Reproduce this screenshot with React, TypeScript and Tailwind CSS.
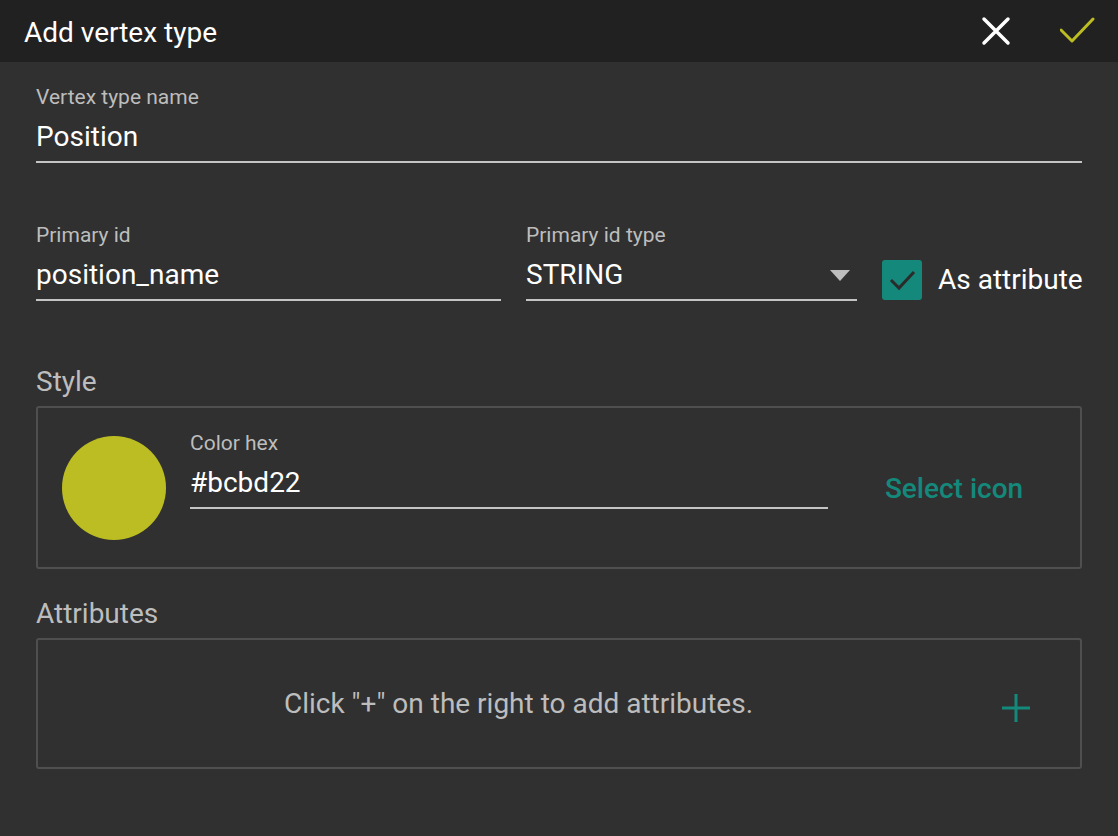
const LABEL = "text-[21px] leading-[24px] text-[#bdbdbd]";
const VALUE = "text-[28px] leading-[32px] text-white";

function Field({ label, value, className }: { label: string; value: string; className?: string }) {
  return (
    <div className={className}>
      <div className={LABEL}>{label}</div>
      <div className={`${VALUE} mt-[12px] pb-[8px] border-b-2 border-[#c4c4c4]`}>{value}</div>
    </div>
  );
}

export default function App() {
  return (
    <div className="w-[1118px] h-[836px] bg-[#303030] font-['Roboto',sans-serif] overflow-hidden">
      {/* Title bar */}
      <div className="h-[62px] bg-[#212121] flex items-center pl-6 pr-[23px]">
        <h1 className="flex-1 pt-[3px] text-[28px] text-white">Add vertex type</h1>
        <svg width="32" height="32" viewBox="0 0 32 32" className="mr-[48px]">
          <path d="M4 4 L28 28 M28 4 L4 28" stroke="#fff" strokeWidth="3.5" strokeLinecap="round" />
        </svg>
        <svg width="35" height="28" viewBox="0 0 35 28">
          <polyline points="1,13 12,24 33,2" fill="none" stroke="#bcbd22" strokeWidth="3" strokeLinecap="round" strokeLinejoin="round" />
        </svg>
      </div>

      <div className="px-9 pt-[23px]">
        <Field label="Vertex type name" value="Position" />

        <div className="flex items-end mt-[60px]">
          <Field label="Primary id" value="position_name" className="w-[465px] shrink-0" />
          <div className="w-[331px] shrink-0 ml-[25px]">
            <div className={LABEL}>Primary id type</div>
            <div className={`${VALUE} mt-[12px] pb-[8px] border-b-2 border-[#c4c4c4] flex items-center justify-between`}>
              <span>STRING</span>
              <svg width="20" height="11" viewBox="0 0 20 11" className="mr-[7px]">
                <polygon points="0,0 20,0 10,11" fill="#bdbdbd" />
              </svg>
            </div>
          </div>
          <div className="flex items-center ml-[25px] mb-[1px] whitespace-nowrap">
            <div className="w-10 h-10 shrink-0 rounded-[3px] bg-[#14897b] flex items-center justify-center">
              <svg width="28" height="22" viewBox="0 0 28 22">
                <polyline points="3,11 11,19 26,3" fill="none" stroke="#2b2b2b" strokeWidth="3" />
              </svg>
            </div>
            <span className="ml-4 text-[28px] leading-[32px] text-white">As attribute</span>
          </div>
        </div>

        <h2 className="mt-[65px] text-[28px] leading-[32px] text-[#bdbdbd]">Style</h2>
        <div className="mt-2 h-[163px] border-2 border-[#4f4f4f] rounded-[3px] flex items-center pl-6">
          <div className="w-[104px] h-[104px] shrink-0 rounded-full bg-[#bcbd22]" />
          <Field label="Color hex" value="#bcbd22" className="w-[638px] shrink-0 ml-6 self-start mt-[23px]" />
          <div className="flex-1 text-center text-[28px] font-medium text-[#14897b] pt-[2px]">Select icon</div>
        </div>

        <h2 className="mt-[29px] text-[28px] leading-[32px] text-[#bdbdbd]">Attributes</h2>
        <div className="mt-2 h-[131px] border-2 border-[#4f4f4f] rounded-[3px] flex items-center">
          <div className="flex-1 text-center text-[28px] leading-[32px] text-[#bdbdbd]">
            Click "+" on the right to add attributes.
          </div>
          <svg width="28" height="28" viewBox="0 0 28 28" className="ml-[3px] mr-[50px] mt-2">
            <path d="M14 0 V28 M0 14 H28" stroke="#14897b" strokeWidth="3" />
          </svg>
        </div>
      </div>
    </div>
  );
}
